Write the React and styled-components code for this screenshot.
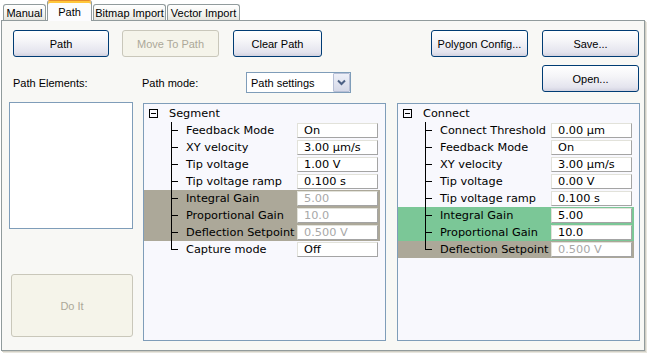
import React from "react";
import styled, { createGlobalStyle, css } from "styled-components";

const GlobalStyle = createGlobalStyle`
  body {
    margin: 0;
    background: #ffffff;
    font-family: "Liberation Sans", Arial, sans-serif;
    font-size: 11px;
    color: #000;
  }
`;

const segment = {
  title: "Segment",
  items: [
    ["Feedback Mode", "On"],
    ["XY velocity", "3.00 μm/s"],
    ["Tip voltage", "1.00 V"],
    ["Tip voltage ramp", "0.100 s"],
    ["Integral Gain", "5.00", "disabled"],
    ["Proportional Gain", "10.0", "disabled"],
    ["Deflection Setpoint", "0.500 V", "disabled"],
    ["Capture mode", "Off"],
  ],
};

const connect = {
  title: "Connect",
  items: [
    ["Connect Threshold", "0.00 μm"],
    ["Feedback Mode", "On"],
    ["XY velocity", "3.00 μm/s"],
    ["Tip voltage", "0.00 V"],
    ["Tip voltage ramp", "0.100 s"],
    ["Integral Gain", "5.00", "active"],
    ["Proportional Gain", "10.0", "active"],
    ["Deflection Setpoint", "0.500 V", "disabled"],
  ],
};

export default function App() {
  return (
    <Window>
      <GlobalStyle />
      <TabBar>
        <Tab $w={43}>Manual</Tab>
        <Tab $w={45} $active>
          Path
        </Tab>
        <Tab $w={73}>Bitmap Import</Tab>
        <Tab $w={73}>Vector Import</Tab>
      </TabBar>
      <Panel>
        <TopRow>
          <LeftTop>
            <ButtonRow>
              <Button $w={96}>Path</Button>
              <Button $w={97} disabled>
                Move To Path
              </Button>
              <Button $w={89}>Clear Path</Button>
              <Spacer />
              <Button $w={97}>Polygon Config...</Button>
            </ButtonRow>
            <LabelRow>
              <Label $w={129}>Path Elements:</Label>
              <Label $w={104}>Path mode:</Label>
              <Select>
                <span>Path settings</span>
                <SelectArrow>
                  <svg width="9" height="7" viewBox="0 0 9 7">
                    <path
                      d="M1 1.5 L4.5 5 L8 1.5"
                      fill="none"
                      stroke="#4d6185"
                      strokeWidth="2"
                    />
                  </svg>
                </SelectArrow>
              </Select>
            </LabelRow>
          </LeftTop>
          <RightCol>
            <Button $w={97}>Save...</Button>
            <Button $w={97}>Open...</Button>
          </RightCol>
        </TopRow>
        <MainRow>
          <LeftCol>
            <ListBox />
            <DoItButton disabled>Do It</DoItButton>
          </LeftCol>
          <Tree data={segment} />
          <Tree data={connect} />
        </MainRow>
      </Panel>
    </Window>
  );
}

function Tree({ data }) {
  const last = data.items.length - 1;
  return (
    <TreeBox>
      <TreeRow>
        <Expander />
        <RootLabel>{data.title}</RootLabel>
      </TreeRow>
      {data.items.map(([label, value, state], i) => (
        <TreeRow key={label} $state={state}>
          <Gutter $last={i === last} />
          <ItemLabel>{label}</ItemLabel>
          <ValueBox $dim={state === "disabled"}>{value}</ValueBox>
        </TreeRow>
      ))}
    </TreeBox>
  );
}

const Window = styled.div`
  width: 647px;
  height: 353px;
  overflow: hidden;
  background: #ffffff;
`;

const TabBar = styled.div`
  display: flex;
  align-items: flex-end;
  gap: 1px;
  height: 20px;
  padding-left: 3px;
  position: relative;
  z-index: 1;
`;

const Tab = styled.div`
  box-sizing: border-box;
  width: ${(p) => p.$w}px;
  height: 16px;
  border: 1px solid #919b9c;
  border-bottom: none;
  border-radius: 3px 3px 0 0;
  background: linear-gradient(#ffffff, #f3f3ef 60%, #e6e5de);
  display: flex;
  align-items: center;
  justify-content: center;
  white-space: nowrap;
  ${(p) =>
    p.$active &&
    css`
      height: 21px;
      margin-bottom: -1px;
      border-top: 1px solid #e68b2c;
      box-shadow: inset 0 2px 0 #ffc73c;
      background: #fcfcfe;
      padding-top: 1px;
    `}
`;

const Panel = styled.div`
  box-sizing: border-box;
  width: 644px;
  height: 331px;
  margin-left: 1px;
  border: 1px solid #919b9c;
  background: #f8f8f5;
  box-shadow: 1px 1px 0 #d0cec4, 2px 2px 0 #e8e6de;
`;

const TopRow = styled.div`
  display: flex;
  padding: 9px 0 0 11px;
`;

const LeftTop = styled.div`
  display: flex;
  flex-direction: column;
  width: 515px;
`;

const ButtonRow = styled.div`
  display: flex;
  gap: 13px;
  & > :nth-child(2) {
    margin-right: 1px;
  }
`;

const Spacer = styled.div`
  flex: 1;
`;

const Button = styled.button`
  box-sizing: border-box;
  width: ${(p) => p.$w}px;
  height: 27px;
  padding: 0;
  border: 1px solid #003c74;
  border-radius: 3px;
  background: linear-gradient(#ffffff, #f5f5f8 40%, #e4e4ee 85%, #d2d2e0);
  font-family: "Liberation Sans", Arial, sans-serif;
  font-size: 11px;
  color: #000;
  &:disabled {
    border-color: #c9c7ba;
    background: #f5f4ea;
    color: #aca899;
  }
`;

const LabelRow = styled.div`
  display: flex;
  align-items: center;
  margin-top: 15px;
  height: 21px;
`;

const Label = styled.div`
  width: ${(p) => p.$w}px;
  white-space: nowrap;
`;

const Select = styled.div`
  box-sizing: border-box;
  width: 105px;
  height: 21px;
  border: 1px solid #7f9db9;
  background: #ffffff;
  display: flex;
  align-items: center;
  justify-content: space-between;
  padding: 0 0 0 4px;
  font-size: 11px;
`;

const SelectArrow = styled.div`
  box-sizing: border-box;
  width: 17px;
  height: 19px;
  border: 1px solid #b7bfd6;
  border-radius: 1px;
  background: linear-gradient(#eef0f8, #d6d9e8);
  display: flex;
  align-items: center;
  justify-content: center;
`;

const RightCol = styled.div`
  display: flex;
  flex-direction: column;
  gap: 8px;
  margin-left: 14px;
`;

const MainRow = styled.div`
  display: flex;
  align-items: flex-start;
  padding-left: 7px;
  margin-top: 9px;
  gap: 10px;
  & > :last-child {
    margin-left: 1px;
  }
`;

const LeftCol = styled.div`
  display: flex;
  flex-direction: column;
  width: 124px;
`;

const ListBox = styled.div`
  box-sizing: border-box;
  height: 127px;
  border: 1px solid #7f9db9;
  background: #ffffff;
`;

const DoItButton = styled(Button)`
  width: 122px;
  height: 63px;
  margin: 45px 0 0 2px;
`;

const TreeBox = styled.div`
  box-sizing: border-box;
  width: 243px;
  height: 238px;
  margin-top: 1px;
  padding-top: 1px;
  border: 1px solid #7f9db9;
  background: #f8f8fd;
  font-family: "DejaVu Sans", Verdana, sans-serif;
  font-size: 11.3px;
`;

const rowColors = {
  disabled: "#aca899",
  active: "#7bc797",
};

const TreeRow = styled.div`
  display: flex;
  align-items: center;
  width: 236px;
  height: 17px;
  background: ${(p) => rowColors[p.$state] || "transparent"};
  white-space: nowrap;
`;

const Expander = styled.div`
  position: relative;
  box-sizing: border-box;
  width: 9px;
  height: 9px;
  margin-left: 5px;
  border: 1px solid #000;
  &::after {
    content: "";
    position: absolute;
    left: 1px;
    right: 1px;
    top: 3px;
    height: 1px;
    background: #000;
  }
`;

const RootLabel = styled.span`
  margin-left: 11px;
`;

const Gutter = styled.div`
  position: relative;
  flex: none;
  width: 42px;
  height: 17px;
  &::before {
    content: "";
    position: absolute;
    left: 27px;
    top: 0;
    width: 1px;
    height: ${(p) => (p.$last ? "9px" : "17px")};
    background: #000;
  }
  &::after {
    content: "";
    position: absolute;
    left: 27px;
    top: 8px;
    width: 7px;
    height: 1px;
    background: #000;
  }
`;

const ItemLabel = styled.span`
  flex: 1;
  min-width: 0;
  overflow: visible;
`;

const ValueBox = styled.div`
  box-sizing: border-box;
  flex: none;
  width: 81px;
  height: 15px;
  margin-right: 2px;
  padding-left: 6px;
  line-height: 13px;
  border: 1px solid;
  border-color: #e2e2da #a4a4a4 #a4a4a4 #e2e2da;
  background: #ffffff;
  color: ${(p) => (p.$dim ? "#a8a8a8" : "#000")};
  position: relative;
`;
